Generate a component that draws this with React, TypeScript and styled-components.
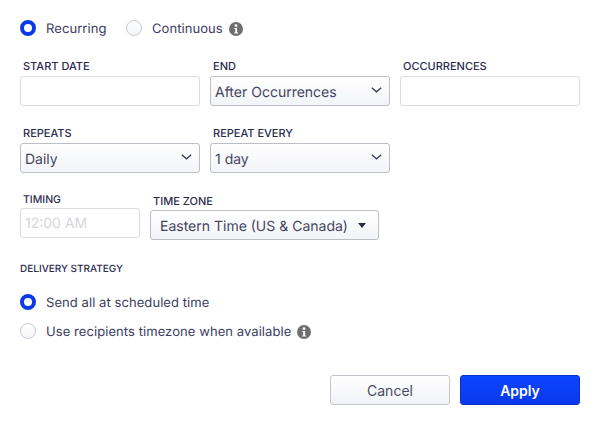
import React from 'react';
import styled, { createGlobalStyle } from 'styled-components';

const Global = createGlobalStyle`
  html, body { margin: 0; padding: 0; background: #fff; }
  body {
    font-family: Inter, "Liberation Sans", sans-serif;
    color: #3f3f5f;
    text-rendering: geometricPrecision;
  }
`;

const Page = styled.div`
  width: 597px;
  height: 422px;
  box-sizing: border-box;
  padding: 20px 17px 0 20px;
  overflow: hidden;
`;

const RadioRow = styled.div<{ $gap?: number; $top?: number }>`
  display: flex;
  align-items: center;
  gap: ${p => p.$gap ?? 0}px;
  height: 16px;
  margin-top: ${p => p.$top ?? 0}px;
`;

const RadioItem = styled.div`
  display: flex;
  align-items: center;
`;

const RadioDot = styled.span<{ $on?: boolean }>`
  width: 16px;
  height: 16px;
  box-sizing: border-box;
  border-radius: 50%;
  flex: none;
  margin-right: 10px;
  background: ${p => (p.$on ? '#fff' : 'linear-gradient(#fff, #f3f4f8)')};
  border: ${p => (p.$on ? '4.7px solid #0b3be8' : '1px solid #c9cbd2')};
`;

const RadioLabel = styled.span`
  font-size: 13px;
  line-height: 16px;
  padding-top: 2px;
  letter-spacing: 0.07px;
  color: #3c3c5e;
  white-space: nowrap;
`;

const InfoIcon = styled.svg`
  width: 14px;
  height: 14px;
  margin-left: 6px;
  margin-top: 2px;
  flex: none;
`;

const FieldRow = styled.div<{ $top: number }>`
  display: flex;
  gap: 10px;
  margin-top: ${p => p.$top}px;
  align-items: flex-start;
`;

const Field = styled.div<{ $width: number; $top?: number }>`
  width: ${p => p.$width}px;
  margin-top: ${p => p.$top ?? 0}px;
  flex: none;
`;

const Label = styled.div<{ $small?: boolean; $height?: number }>`
  font-size: ${p => (p.$small ? 10.5 : 11)}px;
  line-height: 12px;
  height: ${p => p.$height ?? 16}px;
  font-weight: 500;
  padding-left: 3px;
  color: #2b2b4e;
  white-space: nowrap;
`;

const TextBox = styled.div`
  height: 30px;
  box-sizing: border-box;
  border: 1px solid #dcdde1;
  border-radius: 3px;
  background: #fff;
  padding: 1px 0 0 4px;
  font-size: 14px;
  line-height: 28px;
  color: #d5d6da;
`;

const SelectBox = styled.div<{ $padLeft?: number }>`
  height: 30px;
  box-sizing: border-box;
  display: flex;
  align-items: center;
  justify-content: space-between;
  border: 1px solid #bcbec6;
  border-radius: 3px;
  background: linear-gradient(#fff, #f3f4f8);
  padding: 2px ${p => (p.$padLeft ? 12 : 7)}px 0 ${p => p.$padLeft ?? 4}px;
  font-size: 14px;
  color: #44445f;
  white-space: nowrap;
`;

const SectionTitle = styled.div`
  margin-top: 23px;
  font-size: 10px;
  line-height: 12px;
  font-weight: 500;
  color: #2b2b4e;
`;

const Actions = styled.div`
  display: flex;
  justify-content: flex-end;
  gap: 10px;
  width: 560px;
  margin-top: 36px;
`;

const Button = styled.button<{ $primary?: boolean }>`
  width: 120px;
  height: 30px;
  border-radius: 3px;
  font-family: inherit;
  font-size: 14px;
  font-weight: ${p => (p.$primary ? 600 : 400)};
  color: ${p => (p.$primary ? '#fff' : '#4a4a68')};
  border: 1px solid ${p => (p.$primary ? '#0a32c4' : '#c4c6cd')};
  background: ${p => (p.$primary ? 'linear-gradient(#0b45ff, #0a38ec)' : 'linear-gradient(#fff, #f2f3f7)')};
`;

const Info = () => (
  <InfoIcon viewBox="0 0 14 14">
    <circle cx="7" cy="7" r="7" fill="#6f6f6f" />
    <circle cx="7" cy="3.6" r="1.4" fill="#fff" />
    <path d="M5.3 5.9h2.8v4.5h1v1.2H5.2v-1.2h1V7.1h-.9z" fill="#fff" />
  </InfoIcon>
);

const ChevronIcon = styled.svg`
  margin-top: -5px;
  flex: none;
`;

const CaretIcon = styled.svg`
  margin-top: -2px;
  flex: none;
`;

const Chevron = () => (
  <ChevronIcon width="11" height="6" viewBox="0 0 11 6">
    <path d="M.8.8l4.7 4 4.7-4" fill="none" stroke="#3a3a58" strokeWidth="1.3" />
  </ChevronIcon>
);

const Caret = () => (
  <CaretIcon width="8" height="5" viewBox="0 0 8 5">
    <path d="M0 0h8L4 5z" fill="#2a2a48" />
  </CaretIcon>
);

const Radio = ({ on, children }: { on?: boolean; children: React.ReactNode }) => (
  <RadioItem>
    <RadioDot $on={on} />
    <RadioLabel>{children}</RadioLabel>
  </RadioItem>
);

export default function App() {
  return (
    <>
      <Global />
      <Page>
        <RadioRow $gap={19.5}>
          <Radio on>Recurring</Radio>
          <RadioItem>
            <Radio>Continuous</Radio>
            <Info />
          </RadioItem>
        </RadioRow>

        <FieldRow $top={24}>
          <Field $width={180}>
            <Label>START DATE</Label>
            <TextBox />
          </Field>
          <Field $width={180}>
            <Label>END</Label>
            <SelectBox>After Occurrences <Chevron /></SelectBox>
          </Field>
          <Field $width={180}>
            <Label>OCCURRENCES</Label>
            <TextBox />
          </Field>
        </FieldRow>

        <FieldRow $top={21}>
          <Field $width={180}>
            <Label>REPEATS</Label>
            <SelectBox>Daily <Chevron /></SelectBox>
          </Field>
          <Field $width={180}>
            <Label>REPEAT EVERY</Label>
            <SelectBox>1 day <Chevron /></SelectBox>
          </Field>
        </FieldRow>

        <FieldRow $top={21}>
          <Field $width={120}>
            <Label $small $height={14}>TIMING</Label>
            <TextBox>12:00 AM</TextBox>
          </Field>
          <Field $width={229} $top={1}>
            <Label $height={15}>TIME ZONE</Label>
            <SelectBox $padLeft={9}>Eastern Time (US &amp; Canada) <Caret /></SelectBox>
          </Field>
        </FieldRow>

        <SectionTitle>DELIVERY STRATEGY</SectionTitle>

        <RadioRow $top={19}>
          <Radio on>Send all at scheduled time</Radio>
        </RadioRow>
        <RadioRow $top={13}>
          <Radio>Use recipients timezone when available</Radio>
          <Info />
        </RadioRow>

        <Actions>
          <Button>Cancel</Button>
          <Button $primary>Apply</Button>
        </Actions>
      </Page>
    </>
  );
}
